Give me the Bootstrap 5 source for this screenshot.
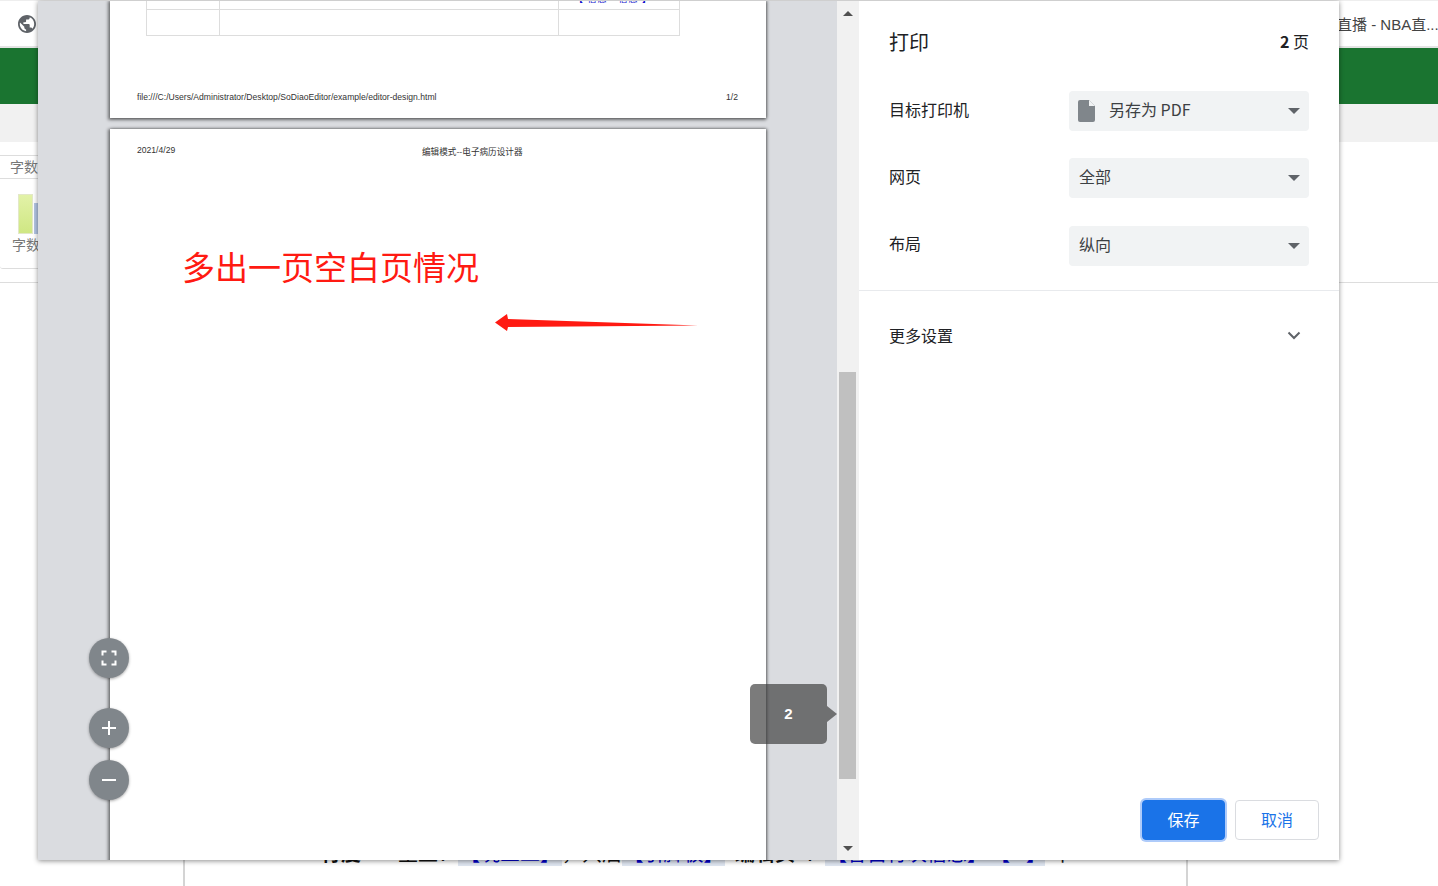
<!DOCTYPE html>
<html lang="zh-CN">
<head>
  <meta charset="UTF-8" />
  <meta name="viewport" content="width=device-width, initial-scale=1.0"/>
  <title>打印</title>
  <link href="https://cdn.jsdelivr.net/npm/bootstrap@5.3.3/dist/css/bootstrap.min.css" rel="stylesheet"/>
  <style>
    html, body { height: 100%; overflow: hidden; }
    body {
      position: relative;
      background: #fff;
      color: #202124;
      font-family: "Liberation Sans", "Noto Sans CJK SC", sans-serif;
    }
    /* page behind the print dialog */
    .site-top { height: 48px; border-bottom: 2px solid #e4e4e4; border-top: 1px solid #eee; padding: 0 0 0 18px; }
    .site-tab { font-size: 15px; color: #444; margin-left: 1319px; white-space: nowrap; line-height: 48px; width: 119px; overflow: hidden; }
    .site-globe { position: absolute; left: 18px; top: 15px; }
    .site-green { height: 56px; background: #1a7430; }
    .site-gray { height: 38px; background: #f1f1f1; }
    .site-panel { width: 60px; height: 114px; margin-top: 13px; border: 1px solid #ddd; border-left: 0; border-radius: 0 0 0 3px; color: #777; font-size: 14px; }
    .site-panel-head { height: 23px; border-bottom: 1px solid #ddd; padding-left: 10px; line-height: 22px; }
    .site-bars { height: 40px; margin: 15px 0 0 18px; gap: 1px; }
    .site-bar-a { width: 15px; height: 40px; background: linear-gradient(#e2f2a8, #cfe783); border: 1px solid #e3e8c8; }
    .site-bar-b { width: 15px; height: 31px; background: #b3c5e3; }
    .site-panel-foot { padding-left: 12px; margin-top: 1px; }
    .site-rule { border-bottom: 1px solid #ddd; height: 14px; }
    .site-paper { position: absolute; left: 183px; top: 840px; width: 1005px; height: 60px; border-left: 2px solid #d4d4d4; border-right: 2px solid #d4d4d4; }
    .site-line { position: absolute; left: 136px; top: 2px; font-size: 20px; line-height: 24px; white-space: nowrap; color: #111; }
    .site-line a { color: #00c; background: #dfe6f1; text-decoration: none; text-align: center; }
    .site-seg-a { width: 77px; }
    .site-seg-b { width: 60px; }
    .site-seg-c { width: 104px; }
    .site-seg-d { width: 103px; }
    .site-seg-e { width: 10px; font-size: 10px; }
    .site-seg-f { width: 70px; }
    .site-seg-g { width: 20px; }
    .site-seg-h { width: 164px; }
    .site-seg-i { width: 56px; letter-spacing: -2px; }

    /* print dialog */
    .pd-dialog {
      position: absolute; left: 38px; top: 1px; width: 1301px; height: 859px;
      box-shadow: 0 1px 5px rgba(0,0,0,.45); background: #fff;
    }
    .pd-preview { position: relative; width: 799px; background: #dadce0; overflow: hidden; }
    .pd-sheet { width: 656px; margin-left: 72px; background: #fff; box-shadow: -1px 1px 3px 1px rgba(0,0,0,.45), 1px 0 3px rgba(0,0,0,.4); position: relative; color: #222; }
    .pd-sheet-one { height: 117px; margin-bottom: 11px; }
    .pd-sheet-two { height: 780px; }
    .pd-grid { position: absolute; left: 36px; top: -26px; width: 534px; border: 1px solid #ddd; border-top: 0; }
    .pd-grid-top { height: 35px; border-bottom: 1px solid #ddd; }
    .pd-grid-low { height: 25px; }
    .pd-grid-c1 { width: 73px; border-right: 1px solid #ddd; }
    .pd-grid-c2 { width: 339px; border-right: 1px solid #ddd; }
    .pd-tiny { position: absolute; font-size: 8.6px; line-height: 10px; white-space: nowrap; color: #333; }
    .pd-clip { left: 464px; top: -7px; color: #11c; font-size: 9px; letter-spacing: 1px; }
    .pd-note { position: absolute; left: 72px; top: 115px; font-size: 33px; line-height: 44px; color: #ff1a12; white-space: nowrap; font-family: "Noto Sans CJK SC", sans-serif; font-weight: 400; }
    .pd-arrow { position: absolute; left: 384px; top: 184px; }
    .pd-fab {
      position: absolute; left: 51px; width: 40px; height: 40px; border-radius: 50%;
      background: #80868b; box-shadow: 0 1px 3px rgba(0,0,0,.35);
    }
    .pd-tip {
      position: absolute; left: 712px; top: 683px; width: 77px; height: 60px; border-radius: 5px;
      background: rgba(60,60,60,.68); color: #fff; font-size: 15px; font-weight: 700; text-align: center; line-height: 60px;
    }
    .pd-tip::after {
      content: ""; position: absolute; left: 77px; top: 22px;
      border-left: 10px solid rgba(60,60,60,.68); border-top: 8px solid transparent; border-bottom: 8px solid transparent;
    }
    .pd-scroll { position: relative; width: 22px; background: #f1f1f1; }
    .pd-thumb { position: absolute; left: 2px; top: 371px; width: 17px; height: 407px; background: #c0c0c0; }
    .pd-scroll-up, .pd-scroll-down { position: absolute; left: 6px; border-left: 5px solid transparent; border-right: 5px solid transparent; }
    .pd-scroll-up { top: 10px; border-bottom: 5px solid #505050; }
    .pd-scroll-down { top: 845px; border-top: 5px solid #505050; }

    .pd-side { width: 480px; background: #fff; font-family: "Noto Sans CJK SC", sans-serif; }
    .pd-head { height: 82px; padding: 0 30px; }
    .pd-title { font-size: 20px; font-weight: 400; margin: 0; color: #202124; }
    .pd-count { font-size: 16px; color: #202124; padding-bottom: 2px; }
    .pd-rows { padding: 8px 30px 0; height: 208px; border-bottom: 1px solid #e8eaed; }
    .pd-row { height: 40px; margin-bottom: 27.4px; }
    .pd-label { width: 180px; font-size: 16px; color: #202124; padding-bottom: 5px; }
    .pd-select { width: 240px; height: 40px; background: #f1f3f4; border-radius: 4px; padding: 0 10px 4px; font-size: 16px; color: #3c4043; }
    .pd-file { margin: 4px 9px 0 -1px; }
    .pd-caret { border-left: 6px solid transparent; border-right: 6px solid transparent; border-top: 6px solid #5f6368; margin-left: auto; margin-right: -1px; margin-top: 4px; }
    .pd-more { padding: 0 30px; height: 88px; font-size: 16px; }
    .pd-chevron { margin-right: 8px; }
    .pd-foot { margin-top: auto; padding: 0 20px 20px 0; gap: 10px; }
    .pd-save, .pd-cancel { height: 40px; border-radius: 4px; font-size: 16px; padding: 0 0 2px; line-height: 1; }
    .pd-save, .pd-save:hover { width: 83px; background: #1a73e8; color: #fff; border: 1px solid #1a73e8; box-shadow: 0 0 0 2px #aecbfa; }
    .pd-cancel, .pd-cancel:hover { width: 84px; background: #fff; color: #1a73e8; border: 1px solid #dadce0; }
  </style>
</head>
<body>

<div class="site-top">
  <svg class="site-globe" width="18" height="18" viewBox="2 2 20 20"><path fill="#5f6368" d="M12 2C6.480 2 2 6.480 2 12s4.480 10 10 10 10-4.480 10-10S17.520 2 12 2zm-1 17.930c-3.950-.490-7-3.850-7-7.930 0-.620.080-1.210.210-1.790L9 15v1c0 1.100.900 2 2 2v1.930zm6.900-2.540c-.260-.810-1-1.390-1.900-1.390h-1v-3c0-.550-.450-1-1-1H8v-2h2c.550 0 1-.450 1-1V7h2c1.100 0 2-.900 2-2v-.410c2.930 1.190 5 4.060 5 7.410 0 2.080-.800 3.970-2.100 5.390z"/></svg>
  <div class="site-tab">直播 - NBA直...</div>
</div>
<div class="site-green"></div>
<div class="site-gray"></div>
<div class="site-panel">
  <div class="site-panel-head">字数</div>
  <div class="site-bars d-flex align-items-end">
    <div class="site-bar-a"></div>
    <div class="site-bar-b"></div>
  </div>
  <div class="site-panel-foot">字数</div>
</div>
<div class="site-rule"></div>
<div class="site-paper">
  <div class="site-line d-flex">
    <b class="site-seg-a">行度</b>
    <span class="site-seg-b">主上：</span>
    <a class="site-seg-c">【况三二】</a>
    <span class="site-seg-b">，只后</span>
    <a class="site-seg-d">【引脚板】</a>
    <span class="site-seg-e">，</span>
    <b class="site-seg-f">编辑页</b>
    <span class="site-seg-g">：</span>
    <a class="site-seg-h">【各自行次信息】</a>
    <a class="site-seg-i">【一】</a>
    <span class="ms-2">下</span>
  </div>
</div>

<div class="pd-dialog d-flex">
  <div class="pd-preview">
    <div class="pd-sheet pd-sheet-one">
      <div class="pd-grid">
        <div class="pd-grid-top d-flex"><div class="pd-grid-c1"></div><div class="pd-grid-c2"></div></div>
        <div class="pd-grid-low d-flex"><div class="pd-grid-c1"></div><div class="pd-grid-c2"></div></div>
      </div>
      <div class="pd-tiny pd-clip">【 信息 - 信息 】</div>
      <div class="pd-tiny" style="left:27px;top:91px">file:///C:/Users/Administrator/Desktop/SoDiaoEditor/example/editor-design.html</div>
      <div class="pd-tiny" style="left:616px;top:91px">1/2</div>
    </div>
    <div class="pd-sheet pd-sheet-two">
      <div class="pd-tiny" style="left:27px;top:16px">2021/4/29</div>
      <div class="pd-tiny" style="left:312px;top:17px;font-family:'Noto Sans CJK SC',sans-serif">编辑模式--电子病历设计器</div>
      <div class="pd-note">多出一页空白页情况</div>
      <svg class="pd-arrow" width="205" height="20" viewBox="0 0 205 20"><path d="M1 9.500 13 1 14 6 204 12.500 14 14 13 18z" fill="#ff1a12"/></svg>
    </div>

    <div class="pd-fab d-flex align-items-center justify-content-center" style="top:637px">
      <svg width="16" height="16" viewBox="0 0 16 16" fill="none" stroke="#fff" stroke-width="2"><path d="M1.500 5.500V1.500H5.500M10.500 1.500H14.500V5.500M14.500 10.500V14.500H10.500M5.500 14.500H1.500V10.500"/></svg>
    </div>
    <div class="pd-fab d-flex align-items-center justify-content-center" style="top:707px">
      <svg width="16" height="16" viewBox="0 0 16 16" stroke="#fff" stroke-width="2"><path d="M1 8H15M8 1V15"/></svg>
    </div>
    <div class="pd-fab d-flex align-items-center justify-content-center" style="top:759px">
      <svg width="16" height="16" viewBox="0 0 16 16" stroke="#fff" stroke-width="2"><path d="M1 8H15"/></svg>
    </div>
    <div class="pd-tip">2</div>
  </div>

  <div class="pd-scroll">
    <div class="pd-scroll-up"></div>
    <div class="pd-thumb"></div>
    <div class="pd-scroll-down"></div>
  </div>

  <div class="pd-side d-flex flex-column">
    <div class="pd-head d-flex justify-content-between align-items-center">
      <h1 class="pd-title">打印</h1>
      <div class="pd-count"><b>2</b> 页</div>
    </div>
    <div class="pd-rows">
      <div class="pd-row d-flex align-items-center">
        <div class="pd-label">目标打印机</div>
        <div class="pd-select d-flex align-items-center">
          <svg class="pd-file" width="18" height="22" viewBox="0 0 18 22"><path d="M2 0H11L17 6V20a2 2 0 0 1-2 2H2a2 2 0 0 1-2-2V2A2 2 0 0 1 2 0z" fill="#80868b"/><path d="M11 0 17 6H11z" fill="#f1f3f4"/></svg>
          <span class="ms-1">另存为 PDF</span>
          <span class="pd-caret"></span>
        </div>
      </div>
      <div class="pd-row d-flex align-items-center">
        <div class="pd-label">网页</div>
        <div class="pd-select d-flex align-items-center"><span>全部</span><span class="pd-caret"></span></div>
      </div>
      <div class="pd-row d-flex align-items-center">
        <div class="pd-label">布局</div>
        <div class="pd-select d-flex align-items-center"><span>纵向</span><span class="pd-caret"></span></div>
      </div>
    </div>
    <div class="pd-more d-flex justify-content-between align-items-center">
      <span>更多设置</span>
      <svg class="pd-chevron" width="14" height="9" viewBox="0 0 14 9" fill="none" stroke="#5f6368" stroke-width="2"><path d="M1.500 1.500 7 7l5.500-5.500"/></svg>
    </div>
    <div class="pd-foot d-flex justify-content-end">
      <button class="btn pd-save">保存</button>
      <button class="btn pd-cancel">取消</button>
    </div>
  </div>
</div>

<script src="https://cdn.jsdelivr.net/npm/bootstrap@5.3.3/dist/js/bootstrap.bundle.min.js"></script>
</body>
</html>
